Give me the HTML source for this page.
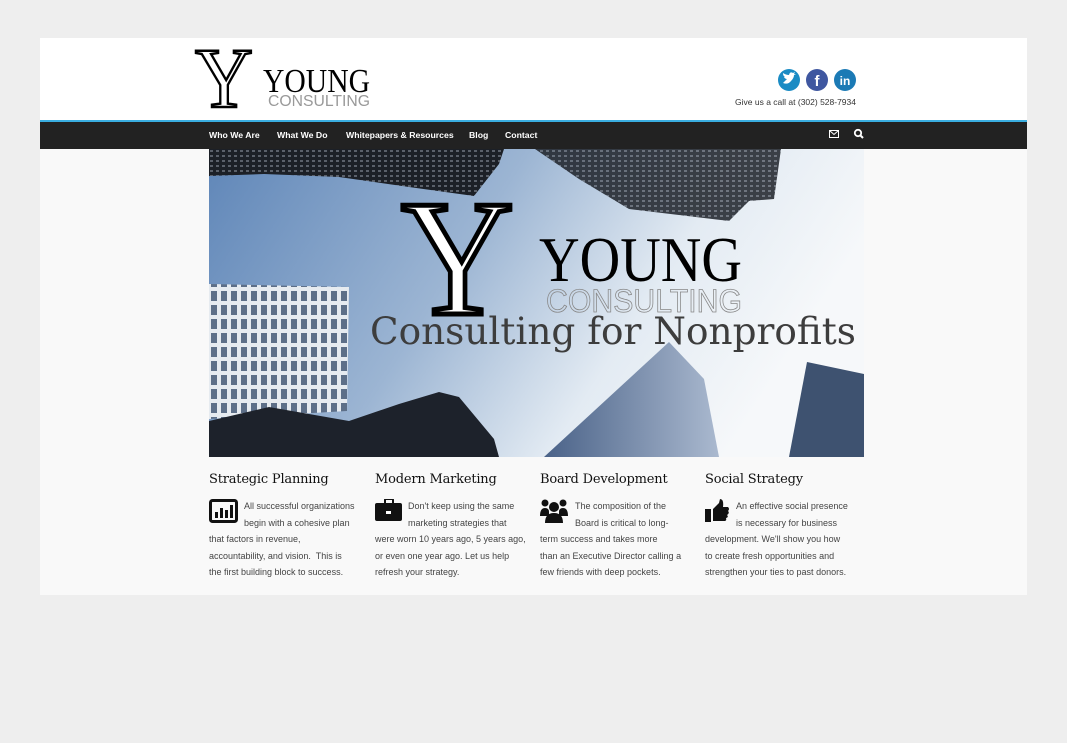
<!DOCTYPE html>
<html><head><style>
*{margin:0;padding:0;box-sizing:border-box}
body{width:1067px;height:743px;background:#eeeeee;position:relative;overflow:hidden;font-family:"Liberation Sans",sans-serif}
#wrap{position:absolute;left:40px;top:38px;width:987px;height:557px;background:#f9f9f9}
#hdr{position:absolute;left:0;top:0;width:987px;height:82px;background:#fff}
#nav{position:absolute;left:0;top:82px;width:987px;height:29px;background:#222;border-top:2px solid #3aaee0}
#nav span{position:absolute;top:8px;color:#fff;font-weight:bold;font-size:8.7px}
.col{position:absolute;top:434px;width:160px}
.col h3{font-family:"DejaVu Serif",serif;font-weight:normal;font-size:13px;color:#111;letter-spacing:-0.2px;height:26px}
.col p{font-size:9px;color:#444;line-height:16.5px;white-space:nowrap}
.col svg{position:absolute;left:0;top:27px}
.ind{padding-left:35px}
</style></head><body>
<div id="wrap">
<div id="hdr">
<svg width="987" height="82" style="position:absolute;left:0;top:0">
<text x="155" y="69" font-family="Liberation Serif" font-size="86" fill="#fff" stroke="#000" stroke-width="2.5" textLength="58" lengthAdjust="spacingAndGlyphs">Y</text>
<text x="223" y="54" font-family="Liberation Serif" font-size="34" fill="#000" textLength="107" lengthAdjust="spacingAndGlyphs">YOUNG</text>
<text x="228" y="68" font-family="Liberation Sans" font-size="16" fill="#999" textLength="102" lengthAdjust="spacingAndGlyphs">CONSULTING</text>
<circle cx="749" cy="42" r="11" fill="#1a8bc4"/><path d="M743 45 Q748 47 751 43 Q754 40 754 37 L756 36 L754 36 L755 34 L753 35 Q750 33 749 37 Q746 37 743 35 Q743 38 745 39 L744 39 Q745 41 747 41 Q745 43 743 45Z" fill="#fff"/>
<circle cx="777" cy="42" r="11" fill="#3f57a0"/><text x="777" y="48" font-size="15" font-weight="bold" fill="#fff" text-anchor="middle">f</text>
<circle cx="805" cy="42" r="11" fill="#1b7ab5"/><text x="805" y="47" font-size="12" font-weight="bold" fill="#fff" text-anchor="middle">in</text>
<text x="816" y="67" font-size="8.5" fill="#333" text-anchor="end">Give us a call at (302) 528-7934</text>
</svg>
</div>
<div id="nav">
<span style="left:169px">Who We Are</span><span style="left:237px">What We Do</span><span style="left:306px">Whitepapers &amp; Resources</span><span style="left:429px">Blog</span><span style="left:465px">Contact</span>
<svg width="987" height="27" style="position:absolute;left:0;top:0">
<rect x="789.5" y="8.5" width="9" height="7" fill="none" stroke="#fff"/><path d="M789.5 8.5 L794 12.5 L798.5 8.5" fill="none" stroke="#fff"/>
<circle cx="818" cy="11" r="3.2" fill="none" stroke="#fff" stroke-width="1.8"/><path d="M820.5 13.5 L823 16" stroke="#fff" stroke-width="2"/>
</svg>
</div>
<svg width="655" height="308" style="position:absolute;left:169px;top:111px">
<defs>
<linearGradient id="sky" x1="0" y1="0" x2="1" y2="0.3"><stop offset="0" stop-color="#5f86b8"/><stop offset="0.45" stop-color="#9cb5d3"/><stop offset="0.75" stop-color="#e3ebf3"/><stop offset="1" stop-color="#f6f8fa"/></linearGradient>
<pattern id="win" width="10" height="14" patternUnits="userSpaceOnUse"><rect width="10" height="14" fill="#e6ebf0"/><rect x="2" y="2" width="6" height="10" fill="#5d6f88"/></pattern>
<pattern id="dk" width="6" height="5" patternUnits="userSpaceOnUse"><rect width="6" height="5" fill="#1c2027"/><rect x="1" y="1" width="3" height="2" fill="#5a606a"/></pattern>
<linearGradient id="gl" x1="0" y1="0" x2="1" y2="0"><stop offset="0" stop-color="#4a6288"/><stop offset="1" stop-color="#aab9cf"/></linearGradient>
</defs>
<rect width="655" height="308" fill="url(#sky)"/>
<polygon points="0,0 295,0 290,15 265,47 200,38 130,28 55,25 0,27" fill="url(#dk)"/>
<polygon points="326,0 572,0 565,50 540,52 520,72 420,60 370,30" fill="url(#dk)" opacity="0.85"/>
<polygon points="0,135 140,138 138,262 0,270" fill="url(#win)"/>
<polygon points="0,272 60,258 140,272 190,255 230,243 250,248 285,290 290,308 0,308" fill="#1d222b"/>
<polygon points="335,308 460,193 495,230 510,308" fill="url(#gl)"/>
<polygon points="580,308 598,213 655,225 655,308" fill="#3e5270"/>
<text x="192" y="165" font-family="Liberation Serif" font-size="166" fill="#fff" stroke="#000" stroke-width="5" textLength="113" lengthAdjust="spacingAndGlyphs">Y</text>
<text x="330" y="132" font-family="Liberation Serif" font-size="64" fill="#000" textLength="203" lengthAdjust="spacingAndGlyphs">YOUNG</text>
<text x="337" y="163" font-family="Liberation Sans" font-size="32" fill="none" stroke="#888" stroke-width="0.8" textLength="196" lengthAdjust="spacingAndGlyphs">CONSULTING</text>
<text x="161" y="195" font-family="DejaVu Serif" font-size="37" fill="#3d3d3d" textLength="486" lengthAdjust="spacingAndGlyphs">Consulting for Nonprofits</text>
</svg>
<div class="col" style="left:169px"><h3>Strategic Planning</h3>
<svg width="29" height="24"><rect x="1.5" y="1.5" width="26" height="21" rx="2" fill="none" stroke="#111" stroke-width="3"/><rect x="6" y="13" width="3" height="6" fill="#111"/><rect x="11" y="9" width="3" height="10" fill="#111"/><rect x="16" y="11" width="3" height="8" fill="#111"/><rect x="21" y="6" width="3" height="13" fill="#111"/></svg>
<p class="ind">All successful organizations<br>begin with a cohesive plan</p><p>that factors in revenue,<br>accountability, and vision.&nbsp; This is<br>the first building block to success.</p></div>
<div class="col" style="left:335px"><h3>Modern Marketing</h3>
<svg width="28" height="24"><rect x="10" y="0" width="8" height="5" rx="1" fill="none" stroke="#111" stroke-width="2"/><rect x="0" y="4" width="27" height="18" rx="2" fill="#111"/><rect x="11" y="12" width="5" height="3" fill="#fff"/></svg>
<p class="ind" style="padding-left:33px">Don't keep using the same<br>marketing strategies that</p><p>were worn 10 years ago, 5 years ago,<br>or even one year ago. Let us help<br>refresh your strategy.</p></div>
<div class="col" style="left:500px"><h3>Board Development</h3>
<svg width="29" height="24"><circle cx="5" cy="4" r="3.5" fill="#111"/><circle cx="23" cy="4" r="3.5" fill="#111"/><circle cx="14" cy="8" r="5" fill="#111"/><path d="M0 17 Q0 9 5 9 Q9 9 9 13 L9 17Z M19 13 Q19 9 23 9 Q28 9 28 17 L19 17Z M5 24 Q5 14 14 14 Q23 14 23 24Z" fill="#111"/></svg>
<p class="ind">The composition of the<br>Board is critical to long-</p><p>term success and takes more<br>than an Executive Director calling a<br>few friends with deep pockets.</p></div>
<div class="col" style="left:665px"><h3>Social Strategy</h3>
<svg width="29" height="24"><rect x="0" y="10" width="6" height="13" fill="#111"/><path d="M8 10 L14 4 L15 0 Q19 0 18 8 L23 8 Q25 10 23 12 Q25 14 22 16 Q24 18 21 19 Q22 22 19 22 L8 22Z" fill="#111"/></svg>
<p class="ind" style="padding-left:31px">An effective social presence<br>is necessary for business</p><p>development. We'll show you how<br>to create fresh opportunities and<br>strengthen your ties to past donors.</p></div>
</div>
</body></html>
